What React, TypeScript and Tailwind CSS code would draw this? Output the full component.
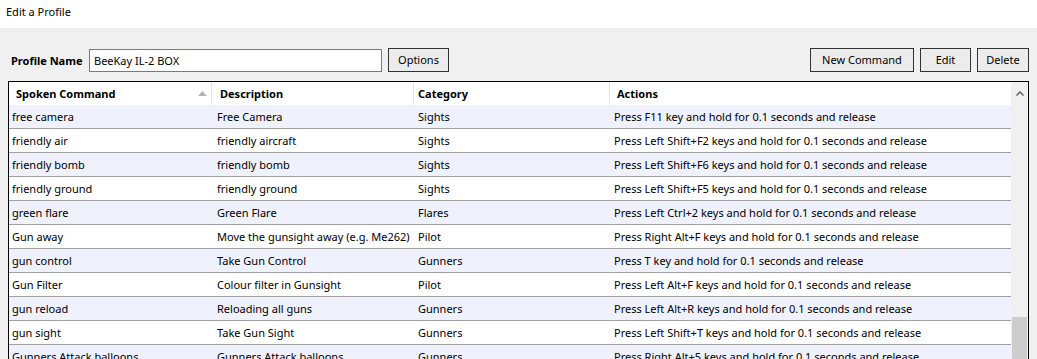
const rows = [
  ['free camera', 'Free Camera', 'Sights', 'Press F11 key and hold for 0.1 seconds and release'],
  ['friendly air', 'friendly aircraft', 'Sights', 'Press Left Shift+F2 keys and hold for 0.1 seconds and release'],
  ['friendly bomb', 'friendly bomb', 'Sights', 'Press Left Shift+F6 keys and hold for 0.1 seconds and release'],
  ['friendly ground', 'friendly ground', 'Sights', 'Press Left Shift+F5 keys and hold for 0.1 seconds and release'],
  ['green flare', 'Green Flare', 'Flares', 'Press Left Ctrl+2 keys and hold for 0.1 seconds and release'],
  ['Gun away', 'Move the gunsight away (e.g. Me262)', 'Pilot', 'Press Right Alt+F keys and hold for 0.1 seconds and release'],
  ['gun control', 'Take Gun Control', 'Gunners', 'Press T key and hold for 0.1 seconds and release'],
  ['Gun Filter', 'Colour filter in Gunsight', 'Pilot', 'Press Left Alt+F keys and hold for 0.1 seconds and release'],
  ['gun reload', 'Reloading all guns', 'Gunners', 'Press Left Alt+R keys and hold for 0.1 seconds and release'],
  ['gun sight', 'Take Gun Sight', 'Gunners', 'Press Left Shift+T keys and hold for 0.1 seconds and release'],
  ['Gunners Attack balloons', 'Gunners Attack balloons', 'Gunners', 'Press Right Alt+5 keys and hold for 0.1 seconds and release'],
];

const cols = 'grid grid-cols-[203px_202px_196px_401px]';

function Btn({ label, w }: { label: string; w: string }) {
  return (
    <button className={`${w} h-[24px] border border-[#333] bg-[#ececec] text-[11px] leading-[22px] text-black`}>
      {label}
    </button>
  );
}

export default function App() {
  return (
    <div
      className="w-[1037px] h-[359px] overflow-hidden bg-[#f0f0f0] text-[11px] text-black"
      style={{ fontFamily: '"Noto Sans", "Open Sans", sans-serif' }}
    >
      <div className="h-[28px] bg-white pl-[6px] pt-[3px] leading-[18px]">Edit a Profile</div>

      <div className="flex items-center h-[24px] mt-[20px] pl-[11px] pr-[8px]">
        <span className="font-bold w-[78px] pt-[2px]">Profile Name</span>
        <input
          defaultValue="BeeKay IL-2 BOX"
          className="w-[293px] h-[23px] border border-[#7a7a7a] bg-white px-[4px] text-[11px] outline-none"
        />
        <div className="ml-[6px]">
          <Btn label="Options" w="w-[61px]" />
        </div>
        <div className="flex-1" />
        <div className="flex gap-[6px]">
          <Btn label="New Command" w="w-[104px]" />
          <Btn label="Edit" w="w-[51px]" />
          <Btn label="Delete" w="w-[52px]" />
        </div>
      </div>

      <div className="ml-[8px] mt-[9px] w-[1021px] h-[400px] border border-black bg-white flex">
        <div className="w-[1002px]">
          <div className={`${cols} h-[23px] items-center font-bold`}>
            <div className="relative h-full flex items-center pl-[7px] pt-[1px] border-r border-[#e5e5e5]">
              Spoken Command
              <svg className="absolute right-[4px] top-[9px]" width="9" height="5" viewBox="0 0 9 5">
                <path d="M0 5 L4.5 0 L9 5 Z" fill="#b4b4b4" />
              </svg>
            </div>
            <div className="h-full flex items-center pl-[8px] pt-[1px] border-r border-[#e5e5e5]">Description</div>
            <div className="h-full flex items-center pl-[4px] pt-[1px] border-r border-[#e5e5e5]">Category</div>
            <div className="h-full flex items-center pl-[7px] pt-[1px]">Actions</div>
          </div>
          {rows.map((r, i) => (
            <div
              key={i}
              className={`${cols} h-[24px] items-center pt-[1px] border-b border-[#a0a0a0] ${i % 2 === 0 ? 'bg-[#eff1fc]' : 'bg-white'}`}
            >
              <div className="pl-[3px] whitespace-nowrap">{r[0]}</div>
              <div className="pl-[5px] whitespace-nowrap">{r[1]}</div>
              <div className="pl-[4px] whitespace-nowrap">{r[2]}</div>
              <div className="pl-[4px] whitespace-nowrap">{r[3]}</div>
            </div>
          ))}
        </div>
        <div className="w-[17px] bg-[#f0f0f0] flex flex-col">
          <div className="h-[17px] flex items-center justify-center pt-[6px]">
            <svg width="8" height="5" viewBox="0 0 8 5">
              <path d="M0.5 4.5 L4 1 L7.5 4.5" stroke="#606060" strokeWidth="1.5" fill="none" />
            </svg>
          </div>
          <div className="h-[218px]" />
          <div className="mx-[1px] flex-1 bg-[#cdcdcd]" />
        </div>
      </div>
    </div>
  );
}
